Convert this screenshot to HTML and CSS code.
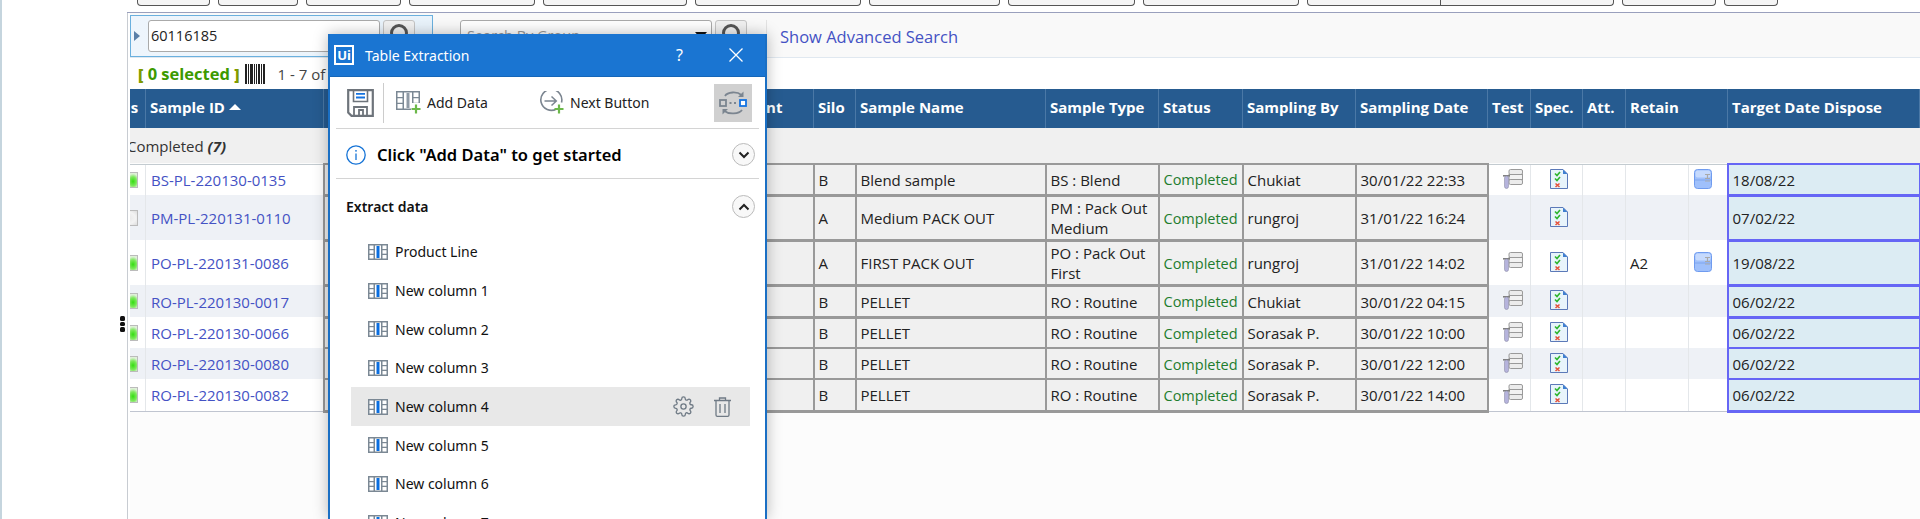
FILE: index.html
```html
<!DOCTYPE html>
<html lang="en">
<head>
<meta charset="utf-8">
<title>Sample list with Table Extraction</title>
<link rel="stylesheet" href="styles.css">
</head>
<body>
<svg class="defs" width="0" height="0" aria-hidden="true">
  <symbol id="i-col" viewBox="0 0 20 16">
    <rect x="0" y="0" width="20" height="16" fill="#7b8894"/>
    <rect x="1.5" y="1.5" width="4" height="3.5" fill="#fff"/><rect x="1.5" y="6.2" width="4" height="3.5" fill="#fff"/><rect x="1.5" y="11" width="4" height="3.5" fill="#fff"/>
    <rect x="14.5" y="1.5" width="4" height="3.5" fill="#fff"/><rect x="14.5" y="6.2" width="4" height="3.5" fill="#fff"/><rect x="14.5" y="11" width="4" height="3.5" fill="#fff"/>
    <rect x="7" y="1.5" width="6" height="13" fill="#fff"/><rect x="8.5" y="2" width="3" height="12" fill="#0a6ee0"/>
  </symbol>
  <symbol id="i-test" viewBox="0 0 20 20">
    <rect x="6" y="0.5" width="13.5" height="5" rx="1.5" fill="#ececec" stroke="#9a9a9a"/>
    <rect x="6" y="5.5" width="13.5" height="5" fill="#f2f2f2" stroke="#9a9a9a"/>
    <rect x="6" y="10.5" width="13.5" height="5" rx="1.5" fill="#ececec" stroke="#9a9a9a"/>
    <rect x="0" y="6" width="7" height="1.6" fill="#808080"/>
    <rect x="1.5" y="7" width="4" height="12.5" rx="2" fill="#b5b3dc" stroke="#8f8fa8" stroke-width=".6"/>
  </symbol>
  <symbol id="i-spec" viewBox="0 0 18 20">
    <path d="M.5.5H13L17.5 5V19.5H.5Z" fill="#e8f4fb" stroke="#5b79b8"/>
    <path d="M13 .5V5H17.5Z" fill="#3f7fd0"/>
    <path d="M5 4.5l2 2 3-3.5M5 9.5l2 2 3-3.5" fill="none" stroke="#2eb52e" stroke-width="1.6"/>
    <path d="M5.5 14.500l4 3.500M9.500 14.500l-4 3.500" fill="none" stroke="#e5533d" stroke-width="1.600"/>
  </symbol>
  <symbol id="i-retain" viewBox="0 0 18 20">
    <rect x=".5" y=".5" width="17" height="19" rx="3" fill="#9fc0fb" stroke="#6f9bef"/>
    <rect x="1.500" y="1.500" width="15" height="7" rx="2" fill="#c6dafd"/>
    <path d="M1 11H17" stroke="#7ea6ee"/>
    <path d="M11 5.500h5M13.500 5.500v4M11 9.500h5M11 12h5" stroke="#a9a9a9" stroke-width="1.200" fill="none"/>
  </symbol>
  <symbol id="i-mag" viewBox="0 0 24 28">
    <circle cx="12" cy="11" r="7.500" fill="none" stroke="#555" stroke-width="3"/>
    <path d="M12 19V27" stroke="#555" stroke-width="4"/>
  </symbol>
</svg>

<div class="app">
  <aside class="gutter"></aside>
  <main class="main">
    <nav class="topbar">
      <span class="tab"></span><span class="tab"></span><span class="tab"></span><span class="tab"></span><span class="tab"></span>
      <span class="tab"></span><span class="tab"></span><span class="tab"></span><span class="tab"></span>
      <span class="tab tab-split"><i></i></span>
      <span class="tab"></span><span class="tab"></span>
    </nav>

    <section class="search">
      <div class="search-active">
        <span class="arrow"></span>
        <div class="input">60116185</div>
        <button class="sbtn" type="button" aria-label="Search"><svg width="24" height="28"><use href="#i-mag"/></svg></button>
      </div>
      <div class="search-group">
        <div class="input input-group"><span class="placeholder">Search By Group</span><span class="caret"></span></div>
        <button class="sbtn" type="button" aria-label="Search"><svg width="24" height="28"><use href="#i-mag"/></svg></button>
      </div>
      <a class="adv">Show Advanced Search</a>
    </section>

    <div class="status-row">
      <span class="sel"><b class="br">[</b> 0 selected <b class="br">]</b></span>
      <svg class="barcode" width="20" height="20" viewBox="0 0 20 20"><path d="M0 0h2v20H0zM3 0h1v20H3zM5 0h3v20H5zM9 0h1v20H9zM11 0h1v20h-1zM13 0h2v20h-2zM16 0h1v20h-1zM18 0h2v20h-2z" fill="#222"/></svg>
      <span class="count">1 - 7 of 7</span>
    </div>

    <div class="grid-clip">
      <table class="grid">
        <colgroup>
          <col class="c0"><col class="c-id"><col class="c-line"><col class="c-plant"><col class="c-silo"><col class="c-name"><col class="c-type"><col class="c-status"><col class="c-by"><col class="c-date"><col class="c-test"><col class="c-spec"><col class="c-att"><col class="c-ret1"><col class="c-ret2"><col class="c-target">
        </colgroup>
        <thead>
          <tr>
            <th>Status</th><th>Sample ID <span class="sort"></span></th><th>Product Line</th><th>Plant</th><th>Silo</th><th>Sample Name</th><th>Sample Type</th><th>Status</th><th>Sampling By</th><th>Sampling Date</th><th>Test</th><th>Spec.</th><th>Att.</th><th colspan="2">Retain</th><th>Target Date Dispose</th>
          </tr>
        </thead>
        <tbody>
          <tr class="group"><td colspan="16">Completed <b><em>(7)</em></b></td></tr>

          <tr class="r-f">
            <td class="ledc"><span class="led"></span></td><td class="id"><a>BS-PL-220130-0135</a></td><td class="hl"></td><td class="hl"></td><td class="hl">B</td><td class="hl">Blend sample</td><td class="hl">BS : Blend</td><td class="hl done">Completed</td><td class="hl">Chukiat</td><td class="hl when">30/01/22 22:33</td>
            <td class="ic ic-test"><svg width="20" height="20"><use href="#i-test"/></svg></td><td class="ic ic-spec"><svg width="18" height="20"><use href="#i-spec"/></svg></td><td></td><td></td><td class="ic ic-ret"><svg width="18" height="20"><use href="#i-retain"/></svg></td><td class="tgt">18/08/22</td>
          </tr>
          <tr class="r-l alt thick">
            <td class="ledc"><span class="led off"></span></td><td class="id"><a>PM-PL-220131-0110</a></td><td class="hl"></td><td class="hl"></td><td class="hl">A</td><td class="hl">Medium PACK OUT</td><td class="hl">PM : Pack Out Medium</td><td class="hl done">Completed</td><td class="hl">rungroj</td><td class="hl when">31/01/22 16:24</td>
            <td></td><td class="ic ic-spec"><svg width="18" height="20"><use href="#i-spec"/></svg></td><td></td><td></td><td></td><td class="tgt">07/02/22</td>
          </tr>
          <tr class="r-l thick">
            <td class="ledc"><span class="led"></span></td><td class="id"><a>PO-PL-220131-0086</a></td><td class="hl"></td><td class="hl"></td><td class="hl">A</td><td class="hl">FIRST PACK OUT</td><td class="hl">PO : Pack Out First</td><td class="hl done">Completed</td><td class="hl">rungroj</td><td class="hl when">31/01/22 14:02</td>
            <td class="ic ic-test"><svg width="20" height="20"><use href="#i-test"/></svg></td><td class="ic ic-spec"><svg width="18" height="20"><use href="#i-spec"/></svg></td><td></td><td>A2</td><td class="ic ic-ret"><svg width="18" height="20"><use href="#i-retain"/></svg></td><td class="tgt">19/08/22</td>
          </tr>
          <tr class="r-s alt thick">
            <td class="ledc"><span class="led"></span></td><td class="id"><a>RO-PL-220130-0017</a></td><td class="hl"></td><td class="hl"></td><td class="hl">B</td><td class="hl">PELLET</td><td class="hl">RO : Routine</td><td class="hl done">Completed</td><td class="hl">Chukiat</td><td class="hl when">30/01/22 04:15</td>
            <td class="ic ic-test"><svg width="20" height="20"><use href="#i-test"/></svg></td><td class="ic ic-spec"><svg width="18" height="20"><use href="#i-spec"/></svg></td><td></td><td></td><td></td><td class="tgt">06/02/22</td>
          </tr>
          <tr class="r-t thick">
            <td class="ledc"><span class="led"></span></td><td class="id"><a>RO-PL-220130-0066</a></td><td class="hl"></td><td class="hl"></td><td class="hl">B</td><td class="hl">PELLET</td><td class="hl">RO : Routine</td><td class="hl done">Completed</td><td class="hl">Sorasak P.</td><td class="hl when">30/01/22 10:00</td>
            <td class="ic ic-test"><svg width="20" height="20"><use href="#i-test"/></svg></td><td class="ic ic-spec"><svg width="18" height="20"><use href="#i-spec"/></svg></td><td></td><td></td><td></td><td class="tgt">06/02/22</td>
          </tr>
          <tr class="r-t alt">
            <td class="ledc"><span class="led"></span></td><td class="id"><a>RO-PL-220130-0080</a></td><td class="hl"></td><td class="hl"></td><td class="hl">B</td><td class="hl">PELLET</td><td class="hl">RO : Routine</td><td class="hl done">Completed</td><td class="hl">Sorasak P.</td><td class="hl when">30/01/22 12:00</td>
            <td class="ic ic-test"><svg width="20" height="20"><use href="#i-test"/></svg></td><td class="ic ic-spec"><svg width="18" height="20"><use href="#i-spec"/></svg></td><td></td><td></td><td></td><td class="tgt">06/02/22</td>
          </tr>
          <tr class="r-s last">
            <td class="ledc"><span class="led"></span></td><td class="id"><a>RO-PL-220130-0082</a></td><td class="hl"></td><td class="hl"></td><td class="hl">B</td><td class="hl">PELLET</td><td class="hl">RO : Routine</td><td class="hl done">Completed</td><td class="hl">Sorasak P.</td><td class="hl when">30/01/22 14:00</td>
            <td class="ic ic-test"><svg width="20" height="20"><use href="#i-test"/></svg></td><td class="ic ic-spec"><svg width="18" height="20"><use href="#i-spec"/></svg></td><td></td><td></td><td></td><td class="tgt">06/02/22</td>
          </tr>
        </tbody>
      </table>
    </div>
  </main>
</div>

<div class="grip"><i></i><i></i><i></i></div>

<section class="dialog">
  <header class="d-title">
    <span class="ui-logo">Ui</span>
    <span class="d-name">Table Extraction</span>
    <span class="d-help">?</span>
    <svg class="d-close" width="14" height="14" viewBox="0 0 14 14"><path d="M.5.500l13 13M13.500.500l-13 13" stroke="#fff" stroke-width="1.300" fill="none"/></svg>
  </header>

  <div class="d-toolbar">
    <svg class="save" width="27" height="28" viewBox="0 0 27 28">
      <path d="M1.200 1.200H25.800V26.800H4.500L1.200 23.500Z" fill="#fff" stroke="#6e747b" stroke-width="2.200"/>
      <path d="M6.500 1.500V12.500H20.500V1.500" fill="none" stroke="#6e747b" stroke-width="1.600"/>
      <path d="M9 4.800H18M9 8.500H18" stroke="#1573e0" stroke-width="1.800"/>
      <path d="M7 27V18H20V27M12 27V21H16V27" fill="none" stroke="#6e747b" stroke-width="1.800"/>
    </svg>
    <span class="d-sep"></span>
    <button class="tool tool-add" type="button">
      <svg width="25" height="23" viewBox="0 0 25 23">
        <rect x="0" y="0" width="24" height="19" fill="#7b8894"/>
        <path d="M1.500 1.500h5v4.500h-5zM1.500 7.300h5v4.500h-5zM1.500 13h5v4.500h-5zM17.500 1.500h5v4.500h-5zM17.500 7.300h5v4.500h-5zM17.500 13h5v4.500h-5zM8 1.500h8v16H8z" fill="#fff"/>
        <rect x="10.500" y="2" width="3" height="15" fill="#8f9aa5"/>
        <rect x="15" y="12" width="10" height="11" fill="#fff"/>
        <path d="M20 13.500v9M15.500 18h9" stroke="#6cb84a" stroke-width="2.200"/>
      </svg>
      <span>Add Data</span>
    </button>
    <button class="tool tool-next" type="button">
      <svg width="25" height="23" viewBox="0 0 25 23">
        <path d="M17.500 19.500A10.500 10.500 0 1 1 22.500 13" fill="none" stroke="#7b8590" stroke-width="1.600" transform="translate(0 -1.500)"/>
        <path d="M5.500 10H17M12.500 5.500L17.300 10 12.500 14.500" fill="none" stroke="#7b8590" stroke-width="1.500"/>
        <path d="M20 13.500v9M15.500 18h9" stroke="#6cb84a" stroke-width="2.200"/>
      </svg>
      <span>Next Button</span>
    </button>
    <span class="toggle">
      <svg width="28" height="28" viewBox="0 0 28 28">
        <path d="M6 7C8.500 2.800 18 2.200 22.500 6" fill="none" stroke="#7b8590" stroke-width="1.800"/><path d="M24.500 2.500V8H19Z" fill="#7b8590"/>
        <path d="M23 21C20 25 10 25.800 5.500 22" fill="none" stroke="#7b8590" stroke-width="1.800"/><path d="M3.500 25.500V20H9Z" fill="#7b8590"/>
        <rect x="1" y="11" width="6" height="6" fill="none" stroke="#7b8590" stroke-width="1.800"/>
        <rect x="21" y="11" width="6" height="6" fill="#fff" stroke="#1573e0" stroke-width="1.800"/>
        <path d="M10.500 14h2M15 14h2" stroke="#7b8590" stroke-width="1.800"/>
      </svg>
    </span>
  </div>

  <div class="d-msg">
    <svg class="info" width="20" height="20" viewBox="0 0 20 20"><circle cx="10" cy="10" r="9.200" fill="none" stroke="#1573d6" stroke-width="1.300"/><path d="M10 8.500V15" stroke="#1573d6" stroke-width="1.300"/><circle cx="10" cy="5.800" r=".9" fill="#1573d6"/></svg>
    <strong>Click "Add Data" to get started</strong>
    <span class="chev"><svg width="12" height="8" viewBox="0 0 12 8"><path d="M1.500 1.500L6 6l4.500-4.500" fill="none" stroke="#222" stroke-width="2"/></svg></span>
  </div>

  <div class="d-head">
    <strong>Extract data</strong>
    <span class="chev"><svg width="12" height="8" viewBox="0 0 12 8"><path d="M1.500 6.500L6 2l4.500 4.500" fill="none" stroke="#222" stroke-width="2"/></svg></span>
  </div>

  <ul class="d-list">
    <li><svg width="20" height="16"><use href="#i-col"/></svg><span>Product Line</span></li>
    <li><svg width="20" height="16"><use href="#i-col"/></svg><span>New column 1</span></li>
    <li><svg width="20" height="16"><use href="#i-col"/></svg><span>New column 2</span></li>
    <li><svg width="20" height="16"><use href="#i-col"/></svg><span>New column 3</span></li>
    <li class="active"><svg width="20" height="16"><use href="#i-col"/></svg><span>New column 4</span>
      <svg class="gear" width="21" height="21" viewBox="0 0 24 24" fill="none" stroke="#6f7a85" stroke-width="1.500"><path d="M12 15a3 3 0 1 0 0-6 3 3 0 0 0 0 6z"/><path d="M19.400 15a1.650 1.650 0 0 0 .33 1.820l.06.06a2 2 0 0 1 0 2.830 2 2 0 0 1-2.830 0l-.06-.06a1.650 1.650 0 0 0-1.820-.33 1.650 1.650 0 0 0-1 1.510V21a2 2 0 0 1-2 2 2 2 0 0 1-2-2v-.09A1.650 1.650 0 0 0 9 19.400a1.650 1.650 0 0 0-1.820.33l-.06.06a2 2 0 0 1-2.830 0 2 2 0 0 1 0-2.830l.06-.06a1.650 1.650 0 0 0 .33-1.820 1.650 1.650 0 0 0-1.510-1H3a2 2 0 0 1-2-2 2 2 0 0 1 2-2h.09A1.650 1.650 0 0 0 4.600 9a1.650 1.650 0 0 0-.33-1.820l-.06-.06a2 2 0 0 1 0-2.830 2 2 0 0 1 2.830 0l.06.06a1.650 1.650 0 0 0 1.820.33H9a1.650 1.650 0 0 0 1-1.510V3a2 2 0 0 1 2-2 2 2 0 0 1 2 2v.09a1.650 1.650 0 0 0 1 1.510 1.650 1.650 0 0 0 1.820-.33l.06-.06a2 2 0 0 1 2.830 0 2 2 0 0 1 0 2.830l-.06.06a1.650 1.650 0 0 0-.33 1.820V9a1.650 1.650 0 0 0 1.510 1H21a2 2 0 0 1 2 2 2 2 0 0 1-2 2h-.09a1.650 1.650 0 0 0-1.510 1z"/></svg>
      <svg class="trash" width="17" height="20" viewBox="0 0 17 20" fill="none" stroke="#6f7a85" stroke-width="1.300"><path d="M0 3.500H17M5.500 3.500V1H11.500V3.500M2 3.500V18a1.300 1.300 0 0 0 1.300 1.300H13.700A1.300 1.300 0 0 0 15 18V3.500M6 7V16M11 7V16"/></svg>
    </li>
    <li><svg width="20" height="16"><use href="#i-col"/></svg><span>New column 5</span></li>
    <li><svg width="20" height="16"><use href="#i-col"/></svg><span>New column 6</span></li>
    <li><svg width="20" height="16"><use href="#i-col"/></svg><span>New column 7</span></li>
  </ul>
</section>
</body>
</html>
```

FILE: styles.css
```css
* { box-sizing: border-box; }
html, body { margin: 0; height: 100%; }
body {
  position: relative;
  height: 519px;
  overflow: hidden;
  background: #fff;
  font-family: "Open Sans", "Noto Sans", sans-serif;
  font-size: 14px;
  color: #222;
}
.defs { position: absolute; }

.app { display: flex; height: 519px; }
.gutter {
  width: 130px;
  flex: none;
  background: linear-gradient(to right, #c5d5de 0, #c5d5de 2px, #fff 2px, #fff 127px, #c8ccd2 127px, #c8ccd2 128px, #fff 128px);
}
.main { flex: 1; min-width: 0; background: #fcfcfc; display: flex; flex-direction: column; }

/* top cut-off buttons */
.topbar {
  height: 13px;
  flex: none;
  margin-left: -3px;
  padding-left: 10px;
  background: #fff;
  border-bottom: 1px solid #9aa0bd;
  display: grid;
  grid-template-columns: 73px 80px 95px 126px 144px 166px 131px 127px 156px 307px 94px 54px;
  column-gap: 8px;
  align-items: start;
}
.tab {
  height: 6px;
  background: #f5f5f5;
  border: 1px solid #555;
  border-top: 0;
  border-radius: 0 0 4px 4px;
  display: flex;
}
.tab-split i { width: 133px; border-right: 1px solid #555; }

/* search */
.search {
  height: 45px;
  flex: none;
  background: #f9f9f9;
  border-bottom: 1px solid #e0e8f0;
  padding-top: 2px;
  display: flex;
  align-items: flex-start;
}
.search-active {
  width: 303px;
  height: 42px;
  background: linear-gradient(to right, #eef5fc, #e9f3fb);
  border: 1px solid #6ab0de;
  padding: 4px 0 0 3px;
  display: flex;
  align-items: flex-start;
}
.arrow {
  width: 0; height: 0;
  margin: 11px 8px 0 0;
  border-left: 6px solid #5b7fa8;
  border-top: 5px solid transparent;
  border-bottom: 5px solid transparent;
}
.input {
  width: 232px;
  height: 32px;
  background: #fff;
  border: 1px solid #aaa;
  border-radius: 3px;
  padding: 0 2px;
  font-size: 14.500px;
  line-height: 30px;
  color: #222;
}
.sbtn {
  width: 32px;
  height: 32px;
  margin-left: 3px;
  padding: 1px 0 0;
  background: #f1f1f1;
  border: 1px solid #c4c4c4;
  border-radius: 3px;
  display: flex;
  justify-content: center;
}
.search-group {
  margin: 5px 0 0 27px;
  padding-right: 19px;
  border-right: 1px solid #e3e3e3;
  height: 37px;
  display: flex;
  align-items: flex-start;
}
.input-group {
  width: 252px;
  display: flex;
  justify-content: space-between;
  padding: 0 4px 0 6px;
}
.placeholder { color: #999; }
.caret {
  width: 0; height: 0;
  margin-top: 11px;
  border-top: 7px solid #111;
  border-left: 6px solid transparent;
  border-right: 6px solid transparent;
}
.adv {
  margin: 9px 0 0 13px;
  color: #4452c4;
  font-size: 16.500px;
  line-height: 26px;
}

/* selected row */
.status-row {
  height: 31px;
  flex: none;
  background: #fff;
  padding-left: 8px;
  display: flex;
  align-items: center;
}
.sel { color: #3d9a00; font-weight: 700; font-size: 16.500px; }
.sel .br { color: #7f9a00; }
.barcode { margin-left: 5px; }
.count { margin-left: 13px; color: #444; font-size: 15px; }

/* table */
.grid-clip { overflow: hidden; flex: none; }
.grid {
  table-layout: fixed;
  width: 1829px;
  margin-left: -40px;
  border-collapse: collapse;
}
.c0 { width: 55px; } .c-id { width: 178px; } .c-line { width: 415px; } .c-plant { width: 75px; }
.c-silo { width: 42px; } .c-name { width: 190px; } .c-type { width: 113px; } .c-status { width: 84px; }
.c-by { width: 113px; } .c-date { width: 132px; } .c-test { width: 43px; } .c-spec { width: 52px; }
.c-att { width: 43px; } .c-ret1 { width: 63px; } .c-ret2 { width: 39px; } .c-target { width: 192px; }

.grid thead tr { height: 39px; background: #265b90; }
.grid th {
  padding: 0 3px 3px 4px;
  color: #fff;
  font-weight: 700;
  font-size: 15px;
  text-align: left;
  white-space: nowrap;
  border-right: 1px solid #4a78a6;
  overflow: hidden;
}
.grid th:first-child { padding-left: 0; }
.sort {
  display: inline-block;
  width: 0; height: 0;
  margin: 0 0 3px 0;
  border-bottom: 6px solid #fff;
  border-left: 6px solid transparent;
  border-right: 6px solid transparent;
}
.group { height: 36px; background: #f0f0f0; }
.group td { padding: 1px 0 0 36px; font-size: 15px; border-bottom: 1px solid #c3cbd0; color: #333; }
.group em { font-style: italic; }

.r-f { height: 31px; }
.r-s { height: 32px; }
.r-t { height: 31px; }
.r-l { height: 45px; }
tbody tr { background: #fff; }
tbody tr.alt { background: #eef1f6; }
tbody td {
  padding: 1px 4px 0;
  font-size: 15px;
  line-height: 20px;
  border-left: 1px solid #e4e7ea;
  overflow: hidden;
}
.last td { border-bottom: 1px solid #c0c5d0; }
.ledc { padding: 0 0 0 25px; }
.led {
  display: block;
  width: 22px;
  height: 16px;
  border: 1px solid #bbb;
  background: radial-gradient(ellipse 30% 55% at 80% 60%, #33dd11 0, #7fe85f 60%, #dff0d8 100%);
}
.led.off { background: radial-gradient(ellipse at center, #e6e6e6 0, #f3f3f3 60%, #dcdcdc 100%); }
.id a { color: #4452c4; }
.grid td.id { padding-left: 5px; }
.grid td.hl { background: #f0f0f0; border: 2px solid #999; padding: 1px 4px 0; color: #222; }
.grid td.when { padding-right: 0; white-space: nowrap; }
.grid td.done { color: #1e7d2e; padding: 2px 0 0 4px; font-size: 14.500px; }
.grid td.tgt { background: #dcecf3; border: 2px solid #6666f5; padding: 1px 4px 0; }
.grid tr.thick td.hl, .grid tr.thick td.tgt { border-top-width: 3px; }
.grid tr.last td.hl, .grid tr.last td.tgt { border-bottom-width: 3px; }
.ic { padding: 0; }
.ic-test { padding-left: 14px; }
.ic-spec { padding-left: 19px; }
.ic-ret { padding-left: 5px; }
.ic svg { display: block; margin: -2px 0 0; }

/* grip */
.grip {
  position: absolute;
  left: 120px;
  top: 316px;
  display: flex;
  flex-direction: column;
  gap: 1px;
}
.grip i { display: block; width: 5px; height: 4.500px; background: #111; border-radius: 1.500px; }

/* dialog */
.dialog {
  position: absolute;
  left: 328px;
  top: 34px;
  width: 439px;
  height: 485px;
  overflow: hidden;
  background: #fff;
  border-left: 2px solid #1a6fc4;
  border-right: 2px solid #1a6fc4;
  font-family: "Noto Sans", "Open Sans", sans-serif;
  box-shadow: 0 0 14px rgba(0,0,0,.28);
  color: #111;
}
.d-title {
  height: 43px;
  margin: 0 -2px;
  padding: 0 24px 0 6px;
  background: #1a75d2;
  border-bottom: 1px solid #1566b8;
  color: #fff;
  display: flex;
  align-items: center;
}
.ui-logo {
  width: 20px;
  height: 20px;
  border: 2px solid #fff;
  font-size: 13px;
  font-weight: 700;
  line-height: 16px;
  text-align: center;
  color: #fff;
}
.d-name { margin-left: 11px; font-size: 14px; }
.d-help { margin-left: auto; font-size: 16px; }
.d-close { margin-left: 46px; }

.d-toolbar {
  height: 52px;
  margin: 0 6px;
  padding: 0 0 0 11px;
  border-bottom: 1px solid #d4d4d4;
  display: flex;
  align-items: center;
}
.d-sep { width: 1px; height: 40px; margin: 0 12px 0 9px; background: #ccc; }
.tool {
  border: 0;
  padding: 0;
  background: none;
  font: inherit;
  font-size: 14px;
  color: #222;
  display: flex;
  align-items: center;
  gap: 6px;
}
.tool-add { width: 143px; }
.tool-next { width: 175px; }
.toggle {
  width: 38px;
  height: 38px;
  background: #d0d0d0;
  display: flex;
  align-items: center;
  justify-content: center;
}

.d-msg {
  height: 50px;
  margin: 0 6px;
  padding: 2px 4px 0 10px;
  border-bottom: 1px solid #d4d4d4;
  display: flex;
  align-items: center;
}
.d-msg strong { margin-left: 11px; font-size: 16.500px; font-weight: 600; color: #000; }
.chev {
  margin-left: auto;
  width: 23px;
  height: 23px;
  border: 1px solid #bbb;
  border-radius: 50%;
  background: #f8f8f8;
  display: flex;
  align-items: center;
  justify-content: center;
}
.d-head {
  height: 53.500px;
  margin: 0 6px;
  padding: 2px 4px 0 10px;
  display: flex;
  align-items: center;
}
.d-head strong { font-size: 14px; font-weight: 600; color: #111; }

.d-list { list-style: none; margin: 0; padding: 0 15px 0 21px; }
.d-list li {
  height: 38.700px;
  padding-left: 17px;
  font-size: 14px;
  display: flex;
  align-items: center;
  gap: 7px;
}
.d-list .active { background: #e8e8e8; }
.gear { margin-left: auto; }
.trash { margin: 0 19px 0 13px; }
```
